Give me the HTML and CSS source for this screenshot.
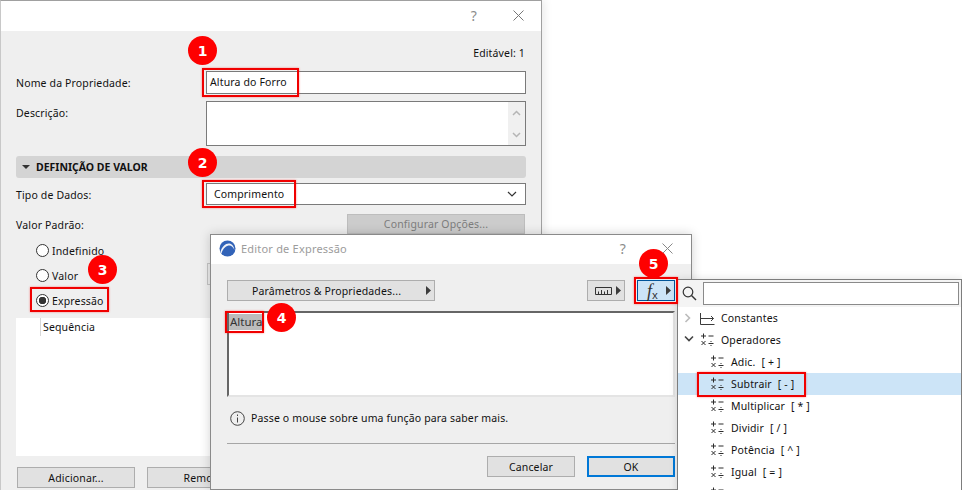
FILE: index.html
```html
<!DOCTYPE html>
<html lang="pt">
<head>
<meta charset="utf-8">
<title>Editor de Expressão</title>
<link rel="stylesheet" href="styles.css">
</head>
<body>
<svg class="defs" width="0" height="0" aria-hidden="true">
  <symbol id="ops" viewBox="0 0 14 13">
    <path d="M3.500 0.500v5M1 3h5M8.500 3h5M1.500 8l4 4M5.500 8l-4 4M8.500 10.500h5" fill="none" stroke="#2c2c2c" stroke-width="1"/>
    <rect x="10.500" y="8" width="1" height="1" fill="#2c2c2c"/>
    <rect x="10.500" y="12" width="1" height="1" fill="#2c2c2c"/>
  </symbol>
  <symbol id="tri" viewBox="0 0 5 9"><path d="M0 0l5 4.500L0 9z" fill="#3c3c3c"/></symbol>
</svg>

<main class="desktop">
  <section class="win win-main">
    <header class="titlebar">
      <span class="tb-help">?</span>
      <svg class="tb-close" width="11" height="11" viewBox="0 0 11 11"><path d="M0.500 0.500l10 10M10.500 0.500l-10 10" stroke="#777" fill="none"/></svg>
    </header>
    <div class="main-body">
      <div class="editable">Editável: 1</div>
      <div class="form-row name-row">
        <label class="flabel">Nome da Propriedade:</label>
        <div class="field">Altura do Forro</div>
      </div>
      <div class="form-row desc-row">
        <label class="flabel">Descrição:</label>
        <div class="field field-area">
          <div class="vscroll">
            <svg width="9" height="6" viewBox="0 0 9 6"><path d="M1 5l3.500-3.500L8 5" fill="none" stroke="#b5b5b5" stroke-width="1.500"/></svg>
            <svg width="9" height="6" viewBox="0 0 9 6"><path d="M1 1l3.500 3.500L8 1" fill="none" stroke="#b5b5b5" stroke-width="1.500"/></svg>
          </div>
        </div>
      </div>
      <div class="section-bar"><span class="section-tri"></span>DEFINIÇÃO DE VALOR</div>
      <div class="form-row type-row">
        <label class="flabel">Tipo de Dados:</label>
        <div class="field field-select">
          <span>Comprimento</span>
          <svg width="10" height="6" viewBox="0 0 10 6"><path d="M1 1l4 4 4-4" fill="none" stroke="#333" stroke-width="1.200"/></svg>
        </div>
      </div>
      <div class="form-row default-row">
        <label class="flabel">Valor Padrão:</label>
        <div class="btn btn-disabled">Configurar Opções...</div>
      </div>
      <div class="radios">
        <div class="radio-row"><span class="radio"></span>Indefinido<span class="value-stub"></span></div>
        <div class="radio-row"><span class="radio"></span>Valor</div>
        <div class="radio-row"><span class="radio radio-on"></span>Expressão</div>
      </div>
      <div class="seq-list"><div class="seq-cell">Sequência</div></div>
      <div class="main-buttons">
        <div class="btn btn-main">Adicionar...</div>
        <div class="btn btn-main">Remover</div>
      </div>
    </div>
  </section>

  <section class="win win-expr">
    <header class="titlebar expr-title">
      <svg class="logo" width="17" height="17" viewBox="0 0 17 17">
        <circle cx="8.500" cy="8.500" r="8" fill="#3263b8"/>
        <path d="M1.500 12C3 6 7 3 10.500 3.500c2.500.3 4.500 3 5 6.500-1.500-3-3-4.500-5-4.500C7.500 5.500 4 8 2.500 13.500z" fill="#eef2f8"/>
      </svg>
      <span class="expr-name">Editor de Expressão</span>
      <span class="tb-help tb-help-expr">?</span>
      <svg class="tb-close" width="11" height="11" viewBox="0 0 11 11"><path d="M0.500 0.500l10 10M10.500 0.500l-10 10" stroke="#888" fill="none"/></svg>
    </header>
    <div class="expr-body">
      <div class="expr-tools">
        <div class="btn btn-params"><span class="params-text">Parâmetros &amp; Propriedades...</span><svg class="tri" width="5" height="9"><use href="#tri"/></svg></div>
        <div class="btn btn-ruler">
          <svg width="17" height="8" viewBox="0 0 17 8"><path d="M0.500 0.500h16v7h-16zM3.500 7V4.500M6.500 7V3M9.500 7V4.500M12.500 7V3" fill="none" stroke="#333"/></svg>
          <svg class="tri" width="5" height="9"><use href="#tri"/></svg>
        </div>
        <div class="btn btn-fx">
          <span class="fx"><i>f</i><sub>x</sub></span>
          <svg class="tri" width="5" height="9"><use href="#tri"/></svg>
        </div>
      </div>
      <div class="expr-area"><span class="token">Altura</span></div>
      <div class="info-row">
        <svg width="15" height="15" viewBox="0 0 15 15"><circle cx="7.500" cy="7.500" r="6.800" fill="none" stroke="#444"/><path d="M7.500 6.500v5M7.500 3.500v1.500" stroke="#444" fill="none"/></svg>
        <span>Passe o mouse sobre uma função para saber mais.</span>
      </div>
      <div class="expr-sep"></div>
      <div class="expr-actions">
        <div class="btn btn-action">Cancelar</div>
        <div class="btn btn-action btn-ok">OK</div>
      </div>
    </div>
  </section>

  <section class="popup">
    <div class="pop-search">
      <svg width="15" height="15" viewBox="0 0 15 15"><circle cx="6" cy="6" r="4.800" fill="none" stroke="#333" stroke-width="1.200"/><path d="M9.500 9.500l4.500 4.500" stroke="#333" stroke-width="1.400"/></svg>
      <div class="pop-input"></div>
    </div>
    <ul class="pop-list">
      <li class="pop-row">
        <svg class="chev" width="8" height="10" viewBox="0 0 8 10"><path d="M1.500 1l4 4-4 4" fill="none" stroke="#bbb" stroke-width="1.600"/></svg>
        <svg class="op-icon op-const" width="15" height="12" viewBox="0 0 15 12"><path d="M0.500 0v11.500h14M0.500 5.500h13M11 3l2.500 2.500L11 8" fill="none" stroke="#3c3c3c"/></svg>
        Constantes
      </li>
      <li class="pop-row">
        <svg class="chev" width="10" height="8" viewBox="0 0 10 8"><path d="M1 1.500l4 4 4-4" fill="none" stroke="#444" stroke-width="1.600"/></svg>
        <svg class="op-icon" width="14" height="13"><use href="#ops"/></svg>
        Operadores
      </li>
      <li class="pop-row pop-sub"><svg class="op-icon" width="14" height="13"><use href="#ops"/></svg>Adic. <span class="key">[ + ]</span></li>
      <li class="pop-row pop-sub pop-sel"><svg class="op-icon" width="14" height="13"><use href="#ops"/></svg>Subtrair <span class="key">[ - ]</span></li>
      <li class="pop-row pop-sub"><svg class="op-icon" width="14" height="13"><use href="#ops"/></svg>Multiplicar <span class="key">[ * ]</span></li>
      <li class="pop-row pop-sub"><svg class="op-icon" width="14" height="13"><use href="#ops"/></svg>Dividir <span class="key">[ / ]</span></li>
      <li class="pop-row pop-sub"><svg class="op-icon" width="14" height="13"><use href="#ops"/></svg>Potência <span class="key">[ ^ ]</span></li>
      <li class="pop-row pop-sub"><svg class="op-icon" width="14" height="13"><use href="#ops"/></svg>Igual <span class="key">[ = ]</span></li>
      <li class="pop-row pop-sub"><svg class="op-icon" width="14" height="13"><use href="#ops"/></svg></li>
    </ul>
  </section>

  <div class="mark mark-1"></div>
  <div class="mark mark-2"></div>
  <div class="mark mark-3"></div>
  <div class="mark mark-4"></div>
  <div class="mark mark-5"></div>
  <div class="mark mark-6"></div>
  <div class="badge badge-1">1</div>
  <div class="badge badge-2">2</div>
  <div class="badge badge-3">3</div>
  <div class="badge badge-4">4</div>
  <div class="badge badge-5">5</div>
</main>
</body>
</html>
```

FILE: styles.css
```css
* { box-sizing: border-box; }
html, body { margin: 0; padding: 0; background: #fff; }
body {
  width: 962px;
  height: 490px;
  overflow: hidden;
  font-family: "Noto Sans", sans-serif;
  font-size: 10.5px;
  letter-spacing: 0.15px;
  color: #111;
}
.defs { position: absolute; }
.desktop { position: relative; width: 962px; height: 490px; overflow: hidden; }

.win { position: absolute; background: #efefef; display: flex; flex-direction: column; }
.win-main {
  left: 0; top: 0; width: 542px; height: 490px;
  border: 1px solid #a0a0a0;
  border-left-color: #c8c8c8;
  border-bottom: 0;
  box-shadow: 3px 0 8px rgba(0,0,0,.08);
}
.titlebar { height: 30px; background: #fff; display: flex; align-items: center; justify-content: flex-end; flex: none; padding-bottom: 2px; }
.tb-help { font-size: 14px; color: #8c8c8c; margin-right: 36px; }
.tb-close { margin-right: 17px; }

.main-body { padding: 14px 15px 0 15px; display: flex; flex-direction: column; }
.editable { height: 16px; line-height: 16px; text-align: right; padding-right: 1px; }
.form-row { display: flex; align-items: center; }
.flabel { width: 190px; flex: none; }
.field {
  width: 320px;
  height: 23px;
  background: #fff;
  border: 1px solid #7a7a7a;
  padding-left: 3px;
  line-height: 21px;
}
.name-row { margin-top: 10px; }
.desc-row { margin-top: 7px; align-items: flex-start; }
.desc-row .flabel { padding-top: 5px; }
.field-area { height: 45px; display: flex; justify-content: flex-end; }
.vscroll {
  width: 17px; height: 43px; background: #f0f0f0;
  display: flex; flex-direction: column; align-items: center; justify-content: space-between;
  padding: 8px 0 7px;
}
.section-bar {
  margin-top: 10px; width: 510px; height: 22px;
  background: #d4d4d4; border-radius: 3px;
  display: flex; align-items: center;
  font-weight: 700;
  letter-spacing: 0;
  padding-left: 6px;
}
.section-tri {
  width: 0; height: 0; margin-right: 6px;
  border-left: 4px solid transparent; border-right: 4px solid transparent; border-top: 4px solid #333;
}
.type-row { margin-top: 5px; }
.type-row .flabel { padding-top: 2px; }
.field-select {
  height: 22px; padding: 0 8px 0 7px; line-height: 20px;
  display: flex; align-items: center; justify-content: space-between;
}
.default-row { margin-top: 9px; height: 20px; }
.default-row .flabel { width: 331px; padding-top: 2px; }
.btn {
  display: flex; align-items: center; justify-content: center;
  background: #e1e1e1; border: 1px solid #adadad;
  height: 21px;
}
.btn-disabled { width: 178px; height: 20px; background: #cccccc; border-color: #bdbdbd; color: #7d7d7d; }
.radios { margin-top: 4px; padding-left: 20px; display: flex; flex-direction: column; }
.radio-row { position: relative; height: 25px; display: flex; align-items: center; gap: 3px; }
.radio {
  width: 13px; height: 13px; border-radius: 50%;
  border: 1px solid #333; background: #fff; flex: none;
}
.radio-on { background: radial-gradient(circle, #333 0 3.500px, #fff 4px); }
.value-stub {
  position: absolute; left: 171px; top: 25px; width: 20px; height: 22px;
  background: #ececec; border: 1px solid #c4c4c4;
}
.seq-list { margin-top: 5px; width: 510px; height: 138px; background: #fff; }
.seq-cell { margin-left: 24px; height: 18px; border-left: 1px solid #d8d8d8; padding-left: 2px; line-height: 18px; }
.main-buttons { margin-top: 11px; padding-left: 1px; display: flex; gap: 12px; }
.btn-main { width: 118px; }

.win-expr {
  left: 210px; top: 234px; width: 482px; height: 256px;
  border: 1px solid #8a8a8a;
  box-shadow: 0 0 10px rgba(0,0,0,.18);
}
.expr-title { height: 29px; justify-content: flex-start; padding-left: 8px; }
.logo { flex: none; }
.expr-name { margin-left: 5px; color: #9c9c9c; flex: 1; letter-spacing: 0.2px; font-size: 11px; }
.tb-help-expr { margin-right: 36px; }
.expr-title .tb-close { margin-right: 18px; }
.expr-body { padding: 16px 15px 0 16px; display: flex; flex-direction: column; }
.expr-tools { display: flex; }
.btn-params { width: 208px; position: relative; justify-content: flex-start; padding-left: 24px; }
.btn-params .tri { position: absolute; right: 3px; top: 5px; }
.btn-ruler { width: 38px; margin-left: 152px; justify-content: space-between; padding: 0 3px 0 7px; }
.btn-fx { width: 38px; margin-left: 12px; justify-content: space-between; padding: 0 3px 0 9px; background: #cce4f7; border: 1px solid #005499; }
.fx { font-family: "Liberation Serif", serif; font-size: 18px; line-height: 1; letter-spacing: 0; color: #333; }
.fx sub { font-family: "Noto Sans", sans-serif; font-size: 11px; vertical-align: -2px; line-height: 0; }
.expr-area {
  margin-top: 10px; width: 448px; height: 86px;
  background: #fff;
  border: 2px solid #e4e4e4;
  border-top-color: #666; border-left-color: #666;
  padding: 1px 0 0 0;
}
.token { display: inline-block; background: #bcbcbc; height: 16px; line-height: 15px; padding: 0 1px; font-size: 11.500px; letter-spacing: 0; color: #333; }
.info-row { margin-top: 12px; height: 18px; padding-left: 3px; display: flex; align-items: center; gap: 6px; }
.expr-sep { margin-top: 16px; width: 448px; height: 1px; background: #a6a6a6; }
.expr-actions { margin-top: 12px; display: flex; justify-content: flex-end; gap: 12px; width: 448px; }
.btn-action { width: 88px; }
.btn-ok { border: 2px solid #0078d7; }

.popup {
  position: absolute; left: 677px; top: 279px; width: 285px; height: 220px;
  background: #fff; border: 1px solid #7d7d7d; border-bottom: 0; overflow: hidden;
  box-shadow: 0 0 8px rgba(0,0,0,.12);
}
.pop-search { height: 27px; background: #f4f4f4; display: flex; align-items: center; padding: 0 2px 1px 4px; gap: 6px; }
.pop-input { width: 256px; height: 23px; background: #fff; border: 1px solid #8a8a8a; }
.pop-list { list-style: none; margin: 0; padding: 0; }
.pop-row { height: 22px; display: flex; align-items: center; position: relative; padding: 0 0 1px 43px; }
.chev { position: absolute; left: 6px; top: 6px; }
.op-icon { position: absolute; left: 22px; top: 4px; }
.op-const { top: 6px; }
.pop-sub { padding-left: 53px; }
.pop-sub .op-icon { left: 32px; }
.pop-sel { background: #cce4f7; }
.key { margin-left: 6px; }

.mark { position: absolute; border: 2px solid #f00000; box-shadow: 0 0 2px rgba(255,0,0,.45); }
.mark-1 { left: 202px; top: 68px; width: 97px; height: 29px; }
.mark-2 { left: 202px; top: 180px; width: 94px; height: 28px; }
.mark-3 { left: 30px; top: 287px; width: 79px; height: 25px; }
.mark-4 { left: 225px; top: 311px; width: 39px; height: 22px; }
.mark-5 { left: 634px; top: 277px; width: 44px; height: 27px; }
.mark-6 { left: 697px; top: 372px; width: 109px; height: 25px; }

.badge {
  position: absolute; width: 29px; height: 29px; border-radius: 50%;
  background: #fe0000; color: #fff;
  display: flex; align-items: center; justify-content: center;
  font-family: "DejaVu Sans", sans-serif;
  font-size: 14px; font-weight: 700; letter-spacing: 0;
}
.badge-1 { left: 188px; top: 36px; }
.badge-2 { left: 188px; top: 148px; }
.badge-3 { left: 88px; top: 255px; }
.badge-4 { left: 267px; top: 303px; }
.badge-5 { left: 639px; top: 249px; }
```
